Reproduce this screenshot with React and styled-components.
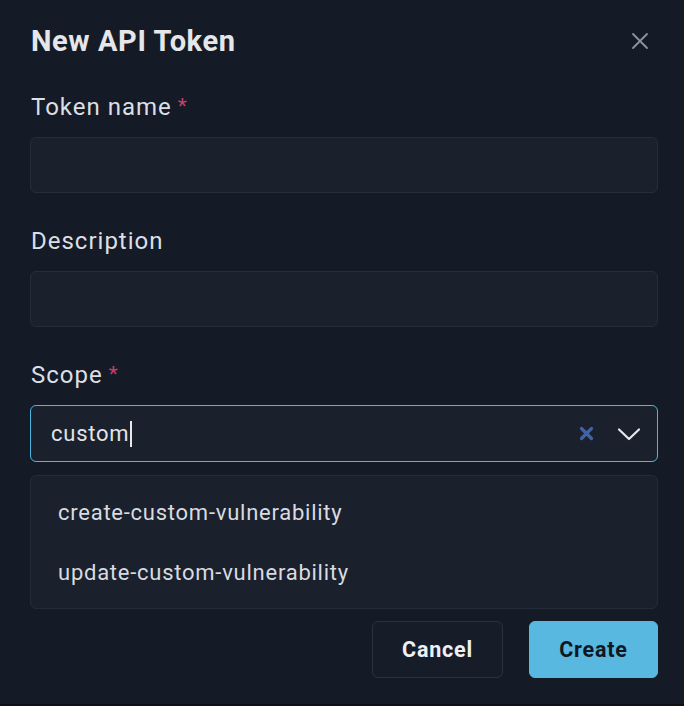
import React from 'react';
import styled, { createGlobalStyle } from 'styled-components';

const GlobalStyle = createGlobalStyle`
  html, body {
    margin: 0;
    padding: 0;
    background: #151b26;
  }
  body {
    font-family: Roboto, "Liberation Sans", sans-serif;
    color: #e2e4e8;
  }
`;

const Dialog = styled.div`
  width: 684px;
  height: 706px;
  box-sizing: border-box;
  background: #151b26;
  padding: 26px 26px 0 30px;
  display: flex;
  flex-direction: column;
  border-bottom: 2px solid #0c1017;
`;

const Header = styled.div`
  display: flex;
  align-items: center;
  justify-content: space-between;
  height: 30px;
  margin-left: 1px;
`;

const Title = styled.h2`
  margin: 0;
  font-size: 29px;
  font-weight: 700;
  letter-spacing: 0.6px;
  color: #e4e6ea;
`;

const CloseButton = styled.button`
  border: 0;
  background: none;
  padding: 0;
  width: 24px;
  height: 24px;
  display: flex;
  align-items: center;
  justify-content: center;
  margin-right: 6px;
`;

const Field = styled.div`
  display: flex;
  flex-direction: column;
  margin-top: ${p => p.$top}px;
`;

const Label = styled.label`
  display: block;
  height: 30px;
  font-size: 24px;
  letter-spacing: 1px;
  color: #dcdfe4;
  margin-left: 1px;
  line-height: 30px;
  margin-bottom: 15px;
`;

const Star = styled.span`
  color: #c2416a;
  font-size: 21px;
  line-height: 1;
  margin-left: 6px;
  vertical-align: 2px;
`;

const Input = styled.div`
  height: ${p => (p.$focused ? 57 : 56)}px;
  box-sizing: border-box;
  border-radius: 6px;
  background: #1a202c;
  border: 1px solid ${p => (p.$focused ? '#4fb6e0' : '#262d3a')};
  display: flex;
  align-items: center;
  padding: 0 16px 0 20px;
  width: 628px;
`;

const Value = styled.span`
  flex: 1;
  font-size: 22px;
  letter-spacing: 0.75px;
  color: #e0e3e8;
  display: flex;
  align-items: center;
`;

const Caret = styled.span`
  display: inline-block;
  width: 2px;
  height: 26px;
  background: #e6e8ec;
  margin-left: 1px;
`;

const Icons = styled.div`
  display: flex;
  align-items: center;
  gap: 23px;
`;

const Menu = styled.div`
  margin-top: 13px;
  width: 628px;
  box-sizing: border-box;
  border-radius: 6px;
  background: #1a202c;
  border: 1px solid #252c38;
  padding: 6px 0;
`;

const Option = styled.div`
  height: 60px;
  display: flex;
  align-items: center;
  padding-left: 27px;
  font-size: 22px;
  letter-spacing: 0.75px;
  color: #d8dbe0;
`;

const Footer = styled.div`
  display: flex;
  justify-content: flex-end;
  gap: 26px;
  margin-top: 12px;
  width: 628px;
`;

const Button = styled.button`
  height: 57px;
  width: ${p => p.$w}px;
  box-sizing: border-box;
  border-radius: 6px;
  font-family: Roboto, "Liberation Sans", sans-serif;
  font-size: 21.5px;
  font-weight: 700;
  letter-spacing: 0.8px;
  cursor: pointer;
  ${p =>
    p.$primary
      ? `background: #58b8df; color: #111722; border: 1px solid #58b8df;`
      : `background: #171d28; color: #eef0f3; border: 1px solid #2a3140;`}
`;

export default function App() {
  return (
    <>
      <GlobalStyle />
      <Dialog>
        <Header>
          <Title>New API Token</Title>
          <CloseButton aria-label="close">
            <svg width="18" height="18" viewBox="0 0 18 18" fill="none" stroke="#8c929e" strokeWidth="1.8" strokeLinecap="round">
              <path d="M2 2L16 16M16 2L2 16" />
            </svg>
          </CloseButton>
        </Header>

        <Field $top={36}>
          <Label>Token name<Star>*</Star></Label>
          <Input />
        </Field>

        <Field $top={33}>
          <Label>Description</Label>
          <Input />
        </Field>

        <Field $top={33}>
          <Label>Scope<Star>*</Star></Label>
          <Input $focused>
            <Value>custom<Caret /></Value>
            <Icons>
              <svg width="15" height="15" viewBox="0 0 15 15" fill="none" stroke="#3f63a8" strokeWidth="3.2" strokeLinecap="round">
                <path d="M2.5 2.5L12.5 12.5M12.5 2.5L2.5 12.5" />
              </svg>
              <svg width="24" height="14" viewBox="0 0 24 14" fill="none" stroke="#e6e8ec" strokeWidth="2.2" strokeLinecap="round" strokeLinejoin="round">
                <path d="M2 2.5L12 12L22 2.5" />
              </svg>
            </Icons>
          </Input>
        </Field>

        <Menu>
          <Option>create-custom-vulnerability</Option>
          <Option>update-custom-vulnerability</Option>
        </Menu>

        <Footer>
          <Button $w={131}>Cancel</Button>
          <Button $w={129} $primary>Create</Button>
        </Footer>
      </Dialog>
    </>
  );
}
